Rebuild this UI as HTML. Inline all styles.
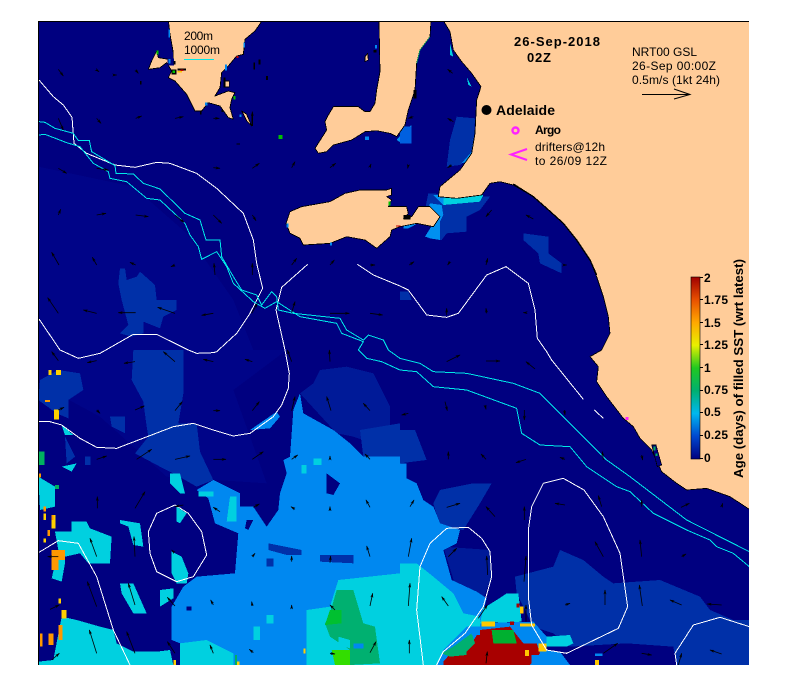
<!DOCTYPE html>
<html><head><meta charset="utf-8"><style>
html,body{margin:0;padding:0;background:#fff}
svg{display:block}
text{font-family:"Liberation Sans",sans-serif;fill:#000}
.b{font-weight:bold}
</style></head><body>
<svg width="791" height="700" viewBox="0 0 791 700" xmlns="http://www.w3.org/2000/svg">
<defs>
<clipPath id="c"><rect x="38" y="21" width="711" height="644"/></clipPath>
<marker id="h" viewBox="0 0 10 10" refX="9" refY="5" markerWidth="15" markerHeight="9" preserveAspectRatio="none" orient="auto" markerUnits="userSpaceOnUse"><path d="M0 0L10 5L0 10L3 5Z" fill="#000"/></marker>
<linearGradient id="g" x1="0" y1="0" x2="0" y2="1">
<stop offset="0" stop-color="#a00000"/><stop offset=".125" stop-color="#e85000"/><stop offset=".25" stop-color="#ffa800"/><stop offset=".375" stop-color="#e8f000"/><stop offset=".5" stop-color="#20c820"/><stop offset=".625" stop-color="#00b070"/><stop offset=".75" stop-color="#00b8f0"/><stop offset=".875" stop-color="#0048d0"/><stop offset="1" stop-color="#000080"/>
</linearGradient>
</defs>
<rect x="38" y="21" width="711" height="644" fill="#000080"/>
<g clip-path="url(#c)"><g transform="scale(.33333)" shape-rendering="crispEdges">

<!-- subtle lighter -->
<path fill="#000488" d="M115 500L400 560L560 700L700 900L760 1050L115 1050Z"/>
<g transform="translate(0,1050)" fill="#000488">
<path d="M115 0H860L700 120L800 400L500 380L300 200L115 100Z"/>
</g>

<!-- mid blue, zoom1 -->
<path fill="#0030a8" d="M360 805L375 805L380 840L410 830L420 815L465 855L470 900L530 900L530 930L490 950L480 985L430 965L430 1000L395 1010L360 1000L385 975L365 900L355 850Z"/>
<g transform="translate(0,1050)" fill="#0030a8">
<path d="M400 0L550 0L550 130L535 220L590 220L600 305L640 390L590 410L520 370L480 350L405 310L445 260L440 230L430 155L395 90Z"/>
<path d="M960 60L1040 50L1120 70L1170 170L1170 240L1090 270L1060 260L1010 250L900 130L940 100Z" fill="#001a98"/>
<path d="M120 90L175 60L240 70L250 120L205 150L205 205L170 190L115 150Z"/>
<path d="M330 200L375 200L375 250L335 230Z"/><path d="M195 260L225 320L200 340Z"/>
<path d="M255 320L272 320L272 345L255 345Z"/><path d="M930 350L990 330L990 370L950 375Z"/>
<path d="M1080 240L1200 220L1200 320L1090 320Z"/>
</g>
<!-- gulf + strait -->
<g transform="translate(870,270)">
<path fill="#0030a8" d="M500 80L555 85L550 190L510 225L470 230L480 150Z"/>
<path fill="#0090f0" d="M550 130L545 190L530 215L515 220L545 185Z"/>
<path fill="#0030a8" d="M415 310L600 320L570 360L530 380L530 425L470 430L455 450L415 445L450 400L405 360Z"/>
<path fill="#0090f0" d="M420 340L455 345L460 375L450 395L450 450L420 445L405 440L430 400L405 380Z"/>
<path fill="#0090f0" d="M430 315L580 318L560 330L460 345Z"/>
<path fill="#00d0e0" d="M460 325L580 315L570 335L460 345Z"/>
<path fill="#0090f0" d="M340 125L365 105L365 150L335 160L320 150Z"/>
<path fill="#0090f0" d="M340 405L380 402L355 415L340 415Z"/>
</g>
<g transform="translate(1200,0)" fill="#0030a8">
<path d="M370 700L445 710L445 760L485 790L485 820L420 790L415 760L370 720Z"/>
<path d="M0 875L25 875L35 900L0 900Z"/>
<path fill="#0060e0" d="M0 380L35 380L35 430L0 430Z"/>
</g>
<!-- zoom 4 mid -->
<g transform="translate(1200,1050)" fill="#0030a8">
<path d="M0 240L45 240L80 330L0 340Z"/>
<path d="M100 460L120 420L220 400L275 400L240 460L190 540L120 530Z"/>
<path d="M130 590L270 600L275 680L250 745L170 720Z" fill="#001a98"/>
<path d="M345 680L460 650L480 600L550 630L610 680L640 700L780 690L900 740L930 780L1000 810L1048 810L1048 945L830 945L820 890L680 880L510 890L460 850L400 830L350 730Z"/>
</g>

<!-- light blue -->
<g transform="translate(0,1050)" fill="#0088f0">
<path d="M880 180L900 130L910 190L1000 240L1050 280L1090 320L1200 320L1200 945L540 945L540 880L515 870L515 770L550 710L590 680L705 670L715 550L645 520L625 445L590 420L640 390L720 430L720 470L760 470L800 530L835 480L840 430L860 370L850 330L870 320L875 250Z"/>
<path d="M750 240L830 185L840 200L810 235Z"/>
</g>
<g transform="translate(1200,1050)" fill="#0088f0">
<path d="M0 340L20 340L20 385L50 400L70 450L100 470L120 520L180 540L170 580L130 600L155 690L230 725L260 745L240 820L400 815L440 860L440 900L480 905L510 945L0 945Z"/>
</g>

<!-- dark islands -->
<g transform="translate(0,1050)" fill="#0030a8">
<path d="M805 580L905 600L905 615L860 615L805 600Z"/><path d="M960 615L1060 615L1060 640L960 635Z"/><path d="M800 625L820 625L820 650L800 650Z"/><path d="M1150 740H1165V755H1150Z"/><path d="M1190 755H1200V775H1190Z"/>
</g>
<g transform="translate(0,1050)" fill="#000080">
<path d="M980 370L1020 400L1000 435L980 430Z"/><path d="M740 510L760 510L745 540L735 535Z"/><path d="M560 770H575V782H560Z"/><path d="M515 650H530V665H515Z"/><path d="M310 845H340V865H310Z"/>
</g>

<!-- cyan -->
<g transform="translate(0,1050)" fill="#00d0e0">
<path d="M115 945L115 935L160 930L185 800L230 810L300 830L340 840L350 880L400 905L470 905L510 900L520 945Z"/>
<path d="M540 880L620 870L700 910L700 945L540 945Z"/>
<path d="M920 945L920 780L990 770L1015 690L1200 670L1200 945Z"/>
<path d="M215 515L260 515L270 535L335 560L330 640L265 640L240 610L195 620L195 640L185 695L155 685L175 600L165 545L215 545Z"/>
<path d="M360 700L400 700L440 790L400 790L365 730Z"/><path d="M480 720L520 715L520 745L480 770Z"/>
<path d="M360 510L420 520L430 590L400 585L385 530L360 520Z"/>
<path d="M515 605L545 620L565 670L560 700L530 700L515 670Z"/>
<path d="M530 470L560 490L540 520L530 515Z"/>
<path d="M510 370L540 370L555 430L540 430L510 400Z"/>
<path d="M595 425H640V440H595Z"/><path d="M690 440H710V515H680Z"/>
<path d="M115 380L165 410L165 470L120 480Z"/>
<path d="M185 225L220 255L195 255Z"/><path d="M185 350L230 340L215 365Z"/>
<path d="M800 795H820V820H800Z"/><path d="M760 830H780V870H760Z"/>
<path d="M940 325H965V345H940Z"/><path d="M905 345H920V370H905Z"/>
</g>
<g transform="translate(1200,1050)" fill="#00d0e0">
<path d="M0 640L50 640L100 680L160 730L190 790L240 800L240 830L200 830L130 900L110 945L0 945Z"/>
<path d="M320 730L355 730L365 815L240 820L250 775L290 750Z"/>
<path d="M440 860L510 855L520 880L500 890L440 890Z"/>
</g>
<g transform="translate(1200,0)" fill="#00d0e0">
<path d="M200 230L215 260L205 255Z"/><path d="M150 130L160 170L150 165Z"/>
</g>

<!-- greens, reds -->
<g transform="translate(0,1050)">
<path fill="#00b070" d="M1010 720L1060 720L1090 820L1125 830L1140 940L1050 945L1050 900L990 860L975 820L990 790Z"/>
<path fill="#00c030" d="M990 780L1025 780L1025 820L975 825Z"/>
<path fill="#33dd00" d="M995 900L1050 900L1050 945L1005 945Z"/>
<path fill="#0088f0" d="M1060 880H1090V895H1060Z"/><path fill="#00d0e0" d="M1015 860L1050 870L1050 895L1015 885Z"/>
<path fill="#ffd000" d="M145 60h10v15h-10zM168 60h15v15h-15zM162 178h15v30h-15zM185 780h15v25h-15zM155 495h12v40h-12zM130 565h8v12h-8zM175 745h8v15h-8zM130 490h8v20h-8z"/>
<path fill="#ff9800" d="M155 600h20v60h-20zM175 600h20v30h-20zM135 150h15v6h-15zM120 850h8v40h-8zM145 850h15v35h-15zM175 825h12v45h-12zM130 470h8v15h-8zM142 540h8v18h-8zM115 370h8v12h-8zM155 495h5v15h-5z"/>
<path fill="#00b060" d="M115 305h18v40h-18zM165 405h12v12h-12z"/>
<path fill="#ffd000" d="M520 930h8v15h-8zM710 935h8v10h-8zM910 895h6v15h-6z"/><path fill="#00b060" d="M705 915h6v30h-6z"/>
</g>
<g transform="translate(1200,1050)">
<path fill="#a80000" d="M130 935L170 890L215 880L240 840L330 830L370 880L410 880L420 910L390 945L130 945Z"/>
<path fill="#00b070" d="M160 890L215 850L225 880L200 905L200 915L150 920L125 910Z"/>
<path fill="#00b030" d="M275 840L340 840L350 880L280 880Z"/>
<path fill="#ffc800" d="M245 815h40v15h-40zM360 820h45v10h-45zM415 880h25v25h-25zM375 900h12v18h-12zM585 930h12v15h-12zM360 770h10v20h-10z"/>
<path fill="#0088f0" d="M215 830h25v25h-25zM350 830h30v25h-30zM395 915h40v30h-40z"/>
<path fill="#a80000" d="M350 760h8v12h-8zM330 815h12v10h-12z"/>
<path fill="#0088f0" d="M585 910h22v8h-22z"/>
</g>

<!-- land -->
<g fill="#ffcc99" stroke="#000" stroke-width="2.5" stroke-linejoin="round">
<g transform="translate(420,63)">
<path d="M85 -3L368 -3L345 30L315 55L310 100L290 105L265 135L245 155L240 200L225 225L265 210L285 215L275 235L270 260L280 295L265 290L240 255L205 245L185 270L165 270L140 220L105 180L85 170L95 150L80 125L60 140L25 145L35 120L50 90L55 110L85 115L100 115L100 95L90 40Z"/>
<path d="M305 270L320 280L335 315L320 300Z"/>
<path d="M255 180L268 180L268 198L255 198Z"/>
</g>
<!-- Yorke neck and foot -->
<path d="M1137 62L1293 62L1290 110L1260 150L1250 190L1245 270L1225 330L1215 375L1190 410L1170 400L1130 392L1095 395L1055 420L1000 435L980 455L955 460L945 445L980 390L975 365L985 345L1000 320L1075 320L1095 335L1110 335L1125 310L1130 270L1140 215Z"/>
<!-- Kangaroo Island -->
<path d="M870 635L905 620L990 605L1035 580L1080 570L1160 570L1175 565L1175 585L1160 590L1175 600L1165 620L1220 620L1225 640L1210 655L1235 650L1255 620L1290 620L1320 650L1300 680L1250 670L1200 680L1175 690L1170 710L1130 745L1095 720L1040 710L990 730L910 735L900 715L870 700L858 670Z"/>
<path d="M1095 170L1103 160L1105 180L1095 185Z"/>
</g>
<g transform="translate(1200,0)">
<path fill="#ffcc99" stroke="#000" stroke-width="2.5" stroke-linejoin="round" d="M130 62L150 95L160 150L185 185L215 220L243 260L230 300L225 400L215 460L180 510L120 560L115 590L170 595L245 585L270 550L300 545L340 555L400 590L440 625L490 670L530 720L570 780L590 830L610 890L625 950L630 1000L605 1050L570 1070L595 1100L590 1145L620 1190L670 1255L700 1280L720 1315L755 1350L785 1415L830 1450L860 1470L920 1465L990 1490L1048 1528L1052 62Z"/>
<path fill="none" stroke="#000" stroke-width="4" d="M340 552L400 590L440 625L490 670L530 720L570 780L590 825"/>
<path fill="none" stroke="#00b060" stroke-width="2" d="M50 190L60 150L90 110"/>
</g>
<g transform="translate(1200,1050)">
<path fill="#000080" stroke="#000" stroke-width="2" d="M755 285L768 285L785 345L772 350Z"/>
<path fill="#00b060" d="M760 290h6v12h-6zM766 310h6v8h-6z"/>
<rect x="676" y="201" width="10" height="9" fill="#ff22ff"/>
</g>
<!-- coast noise -->
<g transform="translate(420,63)">
<path fill="#000080" d="M82 113h20v20h-20z"/>
<path fill="#0088f0" d="M85 114h6v14h-6z"/>
<path fill="#000" d="M95 145h15v15h-15zM112 143h26v6h-26zM100 120h6v10h-6zM250 170h6v30h-6z"/>
<path fill="#c00000" d="M122 145h8v5h-8zM290 105h6v6h-6z"/>
<path fill="#00c000" d="M97 148h8v8h-8zM50 88h6v12h-6zM280 225h6v10h-6z"/>
<path fill="#ffc800" d="M112 150h14v4h-14z"/>
<path fill="#0088f0" d="M85 25h5v25h-5zM255 130h6v18h-6zM310 65h5v15h-5zM195 245h8v8h-8zM298 280h6v8h-6z"/>
<path fill="#000" d="M0 180h4v10h-4zM180 270h5v10h-5zM340 125h5v20h-5zM355 115h6v16h-6zM378 165h6v12h-6zM245 265h4v8h-4zM335 280h4v35h-4z"/>
</g>
<path fill="#00c000" d="M835 405h12v12h-12z"/>
<path fill="#0088f0" d="M1125 135h6v10h-6zM1095 410h12v10h-12zM860 670h6v12h-6zM990 728h6v8h-6z"/>
<path fill="#000" d="M1120 150h10v8h-10zM1240 270h10v25h-10zM710 430h10v4h-10z"/>
<g transform="translate(870,270)"><path fill="#000" d="M340 375h22v14h-22z"/><path fill="#00c000" d="M295 335h6v12h-6z"/><path fill="#c00000" d="M318 406h14v4h-14z"/></g>

<!-- contours -->
<g fill="none" stroke="#fff" stroke-width="3">
<polyline points="117,240 160,290 190,315 216,352 222,430 260,460 345,495 405,502 470,487 510,490 590,520 650,565 730,640 760,720 770,790 788,865 750,940 710,1000 650,1055 640,1058 590,1060 565,1050 470,1003 400,1003 300,1060 235,1075 180,1050 117,957"/>
<polyline points="923,793 845,862 828,930 855,1050 868,1120 865,1165 845,1215 820,1250 750,1300 700,1308 640,1290 580,1270 520,1280 350,1345 290,1342 240,1315 185,1275 150,1265 117,1265"/>
<polyline points="1072,793 1120,825 1200,858 1225,870 1280,945 1340,952 1375,940 1460,825 1518,800 1585,850 1605,930 1612,1015 1640,1055 1655,1080 1750,1198"/>
<polyline points="1783,1230 1810,1255"/>
<polyline points="117,1657 175,1622 235,1630 290,1730 340,1890 390,1995"/>
<polygon points="470,1540 525,1515 565,1540 605,1595 620,1665 580,1730 530,1745 470,1715 450,1660 445,1595"/>
<g transform="translate(1200,1050)">
<polyline points="70,945 50,780 60,650 90,580 140,535 205,532 245,565 270,605 275,680 250,770 195,850 130,905 110,945"/>
<polygon points="430,400 490,385 552,420 610,500 660,610 683,770 655,835 500,910 440,900 395,825 385,740 385,540 395,470"/>
<polyline points="830,945 825,910 880,825 960,802 1048,830"/>
</g>
</g>
<g fill="none" stroke="#00e8e8" stroke-width="3">
<polyline points="117,365 135,367 165,385 220,400 235,422 268,422 275,455 345,497 348,520 400,522 430,550 480,567 555,640 600,660 618,720 660,720 665,770 700,830 725,870 770,885 785,915 815,875 830,890 835,930 880,940 1020,955 1040,990 1090,1020 1105,1005 1150,1020 1165,1050 1200,1075 1260,1090 1300,1115 1400,1120 1540,1150 1620,1180 1680,1240 1750,1310 1820,1380 1890,1430 2060,1560 2248,1655"/>
<polyline points="117,405 135,403 200,428 240,440 280,490 325,515 330,535 380,545 440,595 480,600 555,670 570,705 595,740 605,778 650,755 680,800 700,850 760,905 795,925 830,905 900,950 1010,970 1025,1000 1090,1025 1075,1050 1100,1075 1145,1085 1200,1110 1250,1115 1300,1160 1400,1170 1550,1225 1565,1300 1620,1335 1710,1340 1760,1400 1850,1460 1890,1475 1960,1540 2060,1590 2130,1620 2150,1640 2200,1660 2248,1700"/>
</g>
</g>

<!-- arrows -->
<g transform="scale(.33333)" fill="none" stroke="#000" stroke-width="2.4" marker-end="url(#h)">
<path d="M175 208L190 228"/><path d="M290 210L297 215"/><path d="M340 225L350 225"/><path d="M407 210L415 220"/><path d="M175 355L190 390"/><path d="M290 355L303 370"/><path d="M407 355L425 348"/><path d="M525 355L550 350"/><path d="M640 355L658 355"/><path d="M757 370L757 335"/>
<path d="M175 505L200 520"/><path d="M290 505L325 510"/><path d="M640 503L660 505"/><path d="M757 505L778 490"/><path d="M875 503L885 485"/><path d="M990 503L1007 490"/><path d="M1110 500L1113 492"/>
<path d="M175 645L182 628"/><path d="M290 645L318 640"/><path d="M407 645L445 650"/><path d="M525 645L552 667"/><path d="M640 645L665 670"/><path d="M757 645L768 662"/>
<path d="M177 795L155 757"/><path d="M290 795L277 772"/><path d="M407 795L390 787"/><path d="M525 795L513 800"/><path d="M645 825L642 790"/><path d="M757 825L757 790"/><path d="M875 795L890 775"/><path d="M990 795L1003 780"/><path d="M1110 795L1125 795"/>
<path d="M175 940L143 893"/><path d="M290 940L250 930"/><path d="M407 938L355 938"/><path d="M525 940L473 922"/><path d="M640 940L605 946"/><path d="M755 940L772 910"/><path d="M875 938L885 905"/><path d="M990 940L1048 940"/><path d="M1110 940L1148 945"/>
<g transform="translate(1200,0)">
<path d="M158 220L143 208"/><path d="M160 365L143 355"/><path d="M40 350L25 355"/><path d="M155 495L143 503"/><path d="M25 495L23 505"/><path d="M275 630L258 650"/><path d="M400 657L378 645"/><path d="M28 795L42 785"/><path d="M150 785L143 795"/><path d="M258 795L263 775"/><path d="M495 795L500 795"/><path d="M140 945L140 925"/><path d="M260 940L258 925"/><path d="M375 938L370 938"/>
</g>
<g transform="translate(0,1050)">
<path d="M175 32L155 5"/><path d="M290 32L262 38"/><path d="M405 35L372 40"/><path d="M525 35L490 5"/><path d="M640 35L610 28"/><path d="M757 35L735 28"/><path d="M875 35L862 0"/><path d="M990 35L988 0"/>
<path d="M175 180L192 172"/><path d="M290 180L300 190"/><path d="M405 180L433 168"/><path d="M525 182L547 155"/><path d="M640 182L660 182"/><path d="M757 182L778 155"/><path d="M875 182L885 140"/><path d="M993 182L980 140"/><path d="M1110 182L1090 160"/>
<path d="M410 328L455 298"/><path d="M290 328L320 318"/><path d="M525 328L570 318"/><path d="M640 328L678 328"/><path d="M757 328L790 305"/><path d="M875 328L893 315"/><path d="M990 328L990 318"/><path d="M1110 328L1095 312"/>
<path d="M405 475L435 425"/><path d="M292 475L292 440"/><path d="M550 465L525 470"/><path d="M660 485L640 472"/><path d="M760 472L778 462"/><path d="M885 478L873 470"/><path d="M990 482L990 470"/><path d="M1110 472L1098 450"/>
<path d="M290 620L270 565"/><path d="M405 620L402 560"/><path d="M175 620L143 620"/><path d="M520 605L515 600"/><path d="M757 620L765 610"/><path d="M875 635L875 618"/><path d="M990 638L992 618"/><path d="M1110 620L1100 588"/>
<path d="M290 770L262 695"/><path d="M405 765L385 700"/><path d="M150 778L178 765"/><path d="M525 768L502 742"/><path d="M640 765L632 750"/><path d="M757 768L755 755"/><path d="M875 775L875 765"/><path d="M1005 780L990 765"/><path d="M1110 768L1118 730"/>
<path d="M290 910L268 840"/><path d="M405 910L380 845"/><path d="M155 930L178 910"/><path d="M525 910L502 875"/><path d="M640 910L630 885"/><path d="M760 908L748 898"/><path d="M990 910L1005 912"/><path d="M1110 908L1128 875"/>
</g>
<g transform="translate(1200,1050)">
<path d="M140 35L180 15"/><path d="M258 33L300 33"/><path d="M405 57L378 35"/><path d="M25 190L5 195"/><path d="M135 155L142 182"/><path d="M255 165L258 178"/><path d="M373 180L373 210"/><path d="M493 180L495 195"/><path d="M610 330L607 305"/><path d="M725 315L728 330"/>
<path d="M145 328L145 305"/><path d="M258 328L243 312"/><path d="M378 328L348 338"/><path d="M495 328L480 322"/>
<path d="M30 470L42 450"/><path d="M140 472L180 460"/><path d="M285 500L258 470"/><path d="M495 465L465 460"/><path d="M605 470L595 437"/><path d="M725 470L725 450"/><path d="M843 472L868 460"/><path d="M965 470L968 460"/><path d="M373 510L373 470"/>
<path d="M25 620L35 565"/><path d="M145 620L170 595"/><path d="M263 675L260 618"/><path d="M372 695L378 618"/><path d="M610 620L585 575"/><path d="M725 620L720 570"/><path d="M845 620L858 612"/>
<path d="M25 768L30 700"/><path d="M145 768L125 740"/><path d="M235 805L262 765"/><path d="M378 815L378 765"/><path d="M495 765L510 760"/><path d="M615 765L615 720"/><path d="M727 768L718 705"/><path d="M845 765L810 750"/><path d="M965 765L922 762"/>
<path d="M28 910L28 870"/><path d="M258 940L262 905"/><path d="M610 910L653 880"/><path d="M725 910L755 915"/><path d="M835 945L845 910"/><path d="M965 912L930 900"/>
</g>
</g>

<!-- frame and ticks -->
<g stroke="#000" stroke-width="1" fill="none" shape-rendering="crispEdges">
<path d="M38.5 666V21.5H749.5V666"/>
<path d="M38.5 13V21M135.5 13V21M233.5 13V21M330.5 13V21M428.5 13V21M525.5 13V21M622.5 13V21M720.5 13V21"/>
<path d="M38.5 666V675M135.5 666V675M233.5 666V675M330.5 666V675M428.5 666V675M525.5 666V675M622.5 666V675M720.5 666V675"/>
<path d="M31 118.5H38M31 240.5H38M31 361.5H38M31 483.5H38M31 605.5H38"/>
<path d="M750 118.5H757M750 240.5H757M750 361.5H757M750 483.5H757M750 605.5H757"/>
</g>
<rect x="38" y="665" width="712" height="1" fill="#fff"/>

<!-- axis labels -->
<g class="b" font-size="13">
<text x="8" y="123" textLength="18" lengthAdjust="spacingAndGlyphs">-35</text>
<text x="8" y="245" textLength="18" lengthAdjust="spacingAndGlyphs">-36</text>
<text x="8" y="366" textLength="18" lengthAdjust="spacingAndGlyphs">-37</text>
<text x="8" y="488" textLength="18" lengthAdjust="spacingAndGlyphs">-38</text>
<text x="8" y="610" textLength="18" lengthAdjust="spacingAndGlyphs">-39</text>
<text x="27" y="689">134</text><text x="124" y="689">135</text><text x="222" y="689">136</text><text x="319" y="689">137</text>
<text x="417" y="689">138</text><text x="514" y="689">139</text><text x="611" y="689">140</text><text x="709" y="689">141</text>
</g>

<!-- annotations -->
<text x="184" y="40" font-size="12" textLength="29">200m</text>
<text x="184" y="54" font-size="12" textLength="36">1000m</text>
<rect x="184" y="59" width="30" height="1" fill="#00e8e8"/>
<text x="514" y="46" class="b" font-size="13" textLength="86">26-Sep-2018</text>
<text x="527" y="62" class="b" font-size="13" textLength="24">02Z</text>
<text x="632" y="56" font-size="12" textLength="65">NRT00 GSL</text>
<text x="632" y="70" font-size="12" textLength="84">26-Sep 00:00Z</text>
<text x="632" y="84" font-size="12" textLength="88">0.5m/s (1kt 24h)</text>
<path d="M642 94.5H690M674 89L690 94.5L674 99" fill="none" stroke="#000" stroke-width="1"/>
<circle cx="486.5" cy="110" r="5" fill="#000"/>
<text x="496" y="115" class="b" font-size="14" textLength="59">Adelaide</text>
<circle cx="515.5" cy="130.5" r="3" fill="none" stroke="#ff22ff" stroke-width="2.4"/>
<text x="535" y="134" class="b" font-size="12" textLength="26">Argo</text>
<path d="M527 149L511 154.5L527 160" fill="none" stroke="#ff22ff" stroke-width="2"/>
<text x="535" y="151" font-size="12" textLength="70">drifters@12h</text>
<text x="535" y="165" font-size="12" textLength="72">to 26/09 12Z</text>

<!-- colorbar -->
<rect x="691" y="277" width="9" height="182" fill="url(#g)" stroke="#000" stroke-width=".6"/>
<g stroke="#000" stroke-width="1" shape-rendering="crispEdges"><path d="M700 277.5H703M700 299.5H703M700 322.5H703M700 344.5H703M700 367.5H703M700 390.5H703M700 412.5H703M700 435.5H703M700 458.5H703"/></g>
<g class="b" font-size="12">
<text x="704" y="282">2</text><text x="704" y="304" textLength="24">1.75</text><text x="704" y="327">1.5</text><text x="704" y="349" textLength="24">1.25</text><text x="704" y="372">1</text><text x="704" y="394" textLength="24">0.75</text><text x="704" y="416">0.5</text><text x="704" y="439" textLength="24">0.25</text><text x="704" y="462">0</text>
</g>
<text transform="translate(743,478) rotate(-90)" class="b" font-size="13" textLength="219" lengthAdjust="spacingAndGlyphs">Age (days) of filled SST (wrt latest)</text>
<text transform="translate(781,669) rotate(-90)" font-size="14" textLength="272" lengthAdjust="spacingAndGlyphs" stroke="#000" stroke-width=".25">© IMOS 01-Oct-2018 13:07 Hobart Time</text>
</svg>
</body></html>
